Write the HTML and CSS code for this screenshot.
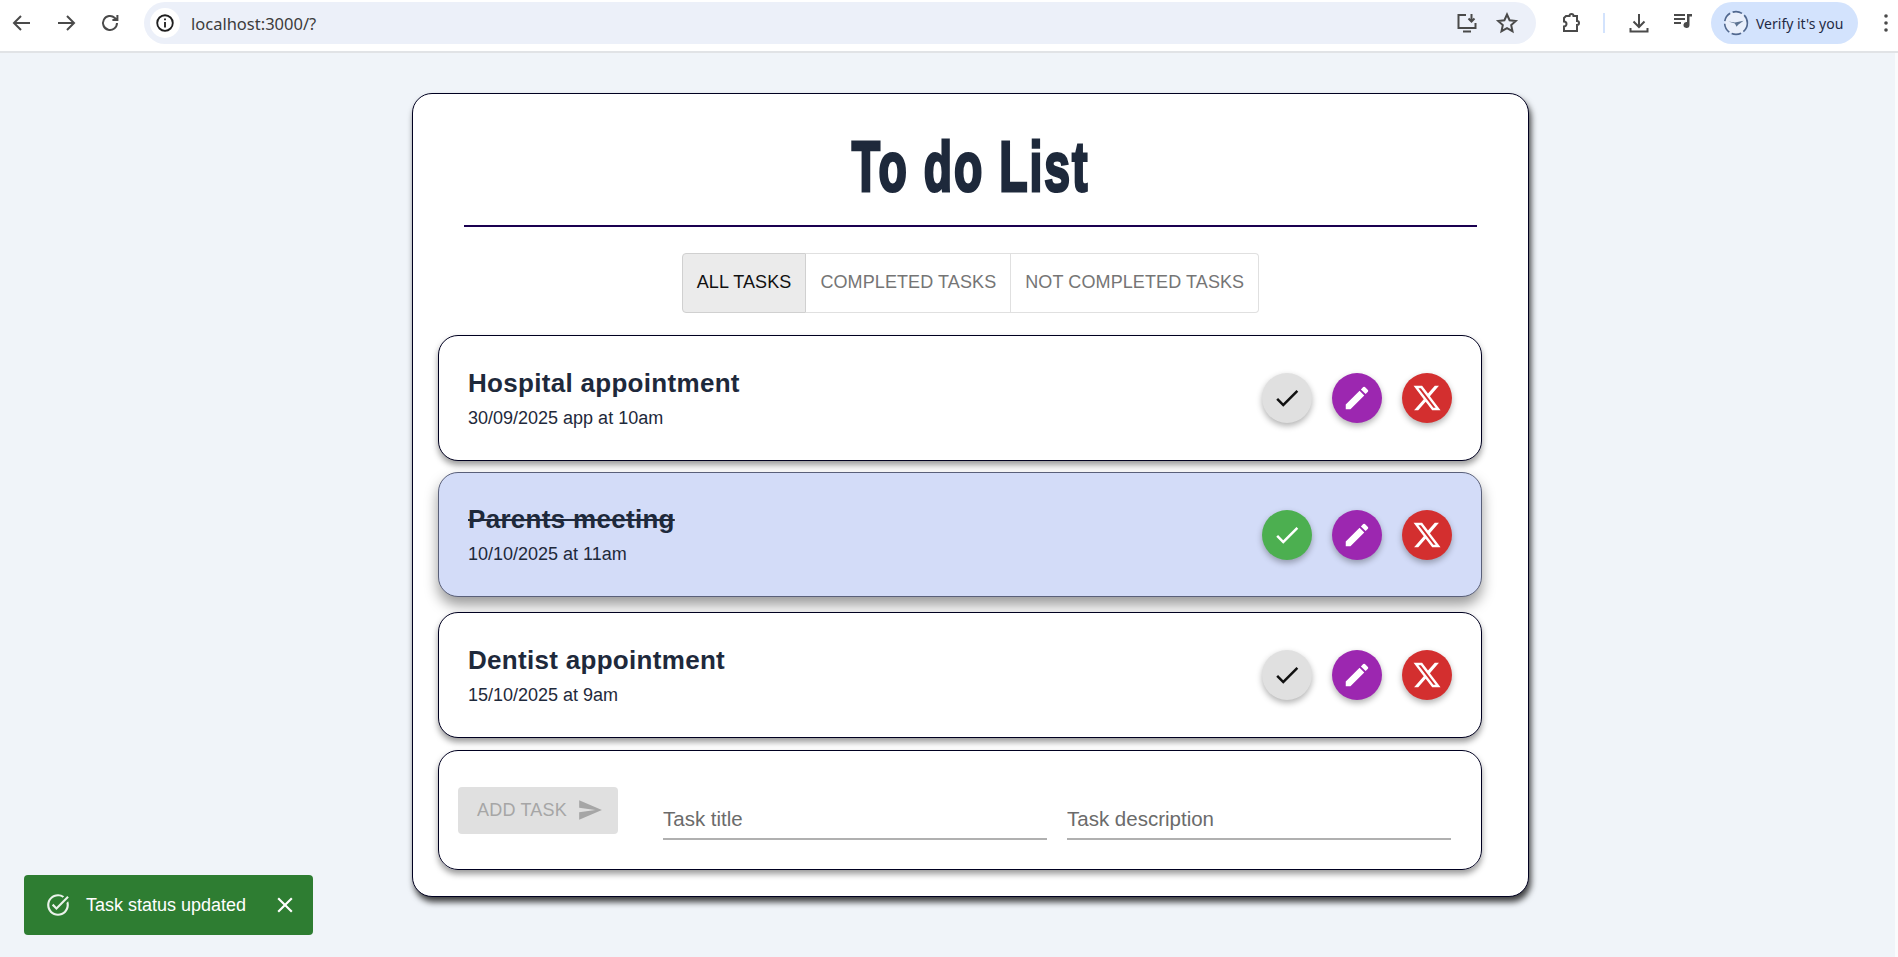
FILE: index.html
```html
<!DOCTYPE html>
<html lang="en">
<head>
    <meta charset="UTF-8">
    <title>To do List</title>
    <link rel="stylesheet" href="styles.css">
</head>
<body>

<header class="toolbar">
    <div class="nav">
        <svg class="tool" viewBox="0 0 24 24"><path d="M20 12H5M11 5l-7 7 7 7"/></svg>
        <svg class="tool" viewBox="0 0 24 24"><path d="M4 12h15M13 5l7 7-7 7"/></svg>
        <svg class="tool" viewBox="0 0 24 24"><path d="M19 12a7 7 0 1 1-2.2-5.1L19 9M19.400 4v5h-5"/></svg>
    </div>
    <div class="address">
        <span class="site-info">
            <svg viewBox="0 0 24 24"><circle cx="12" cy="12" r="8.500"/><path d="M12 11v6M12 7v2"/></svg>
        </span>
        <span class="url">localhost:3000/?</span>
        <svg class="tool install" viewBox="0 0 24 24"><path d="M11 4H3.500v13h17v-5M8 20.500h8M16.500 3v7M13.500 7.500l3 3 3-3"/></svg>
        <svg class="tool star" viewBox="0 0 24 24"><path d="M12 3.500l2.600 5.700 6.200.7-4.600 4.200 1.300 6.100-5.500-3.100-5.500 3.100 1.300-6.100-4.600-4.200 6.200-.7z"/></svg>
    </div>
    <svg class="tool puzzle" viewBox="0 0 24 24"><path d="M8 5h3.500a2 2 0 0 1 4 0H19v5a2 2 0 0 1 0 4v6H6v-4.500a2.500 2.500 0 0 0 0-5V7z"/></svg>
    <span class="separator"></span>
    <svg class="tool download" viewBox="0 0 24 24"><path d="M12 3v13M6.500 10.500L12 16l5.500-5.500M3.500 17v3.500h17V17"/></svg>
    <svg class="tool music" viewBox="0 0 24 24"><path d="M3 6h11M3 10h11M3 14h7"/><path class="music-note" d="M16 5h5v2.500h-2.500V16a3 3 0 1 1-2.500-3z"/></svg>
    <div class="profile">
        <svg class="avatar" viewBox="0 0 24 24"><circle class="avatar-ring" cx="12" cy="12" r="10.500"/><path class="avatar-wing" d="M5 10.500l6 1 8-1.500-5 3.500-1.500 2-1.500-3z"/></svg>
        <span>Verify it's you</span>
    </div>
    <svg class="dots" viewBox="0 0 4 18"><circle cx="2" cy="2" r="1.800"/><circle cx="2" cy="9" r="1.800"/><circle cx="2" cy="16" r="1.800"/></svg>
</header>

<main class="card">
    <h1 class="title"><span>To do List</span></h1>

    <div class="tabs">
        <button class="tab tab-active">ALL TASKS</button>
        <button class="tab">COMPLETED TASKS</button>
        <button class="tab">NOT COMPLETED TASKS</button>
    </div>

    <div class="tasks">
        <div class="task task-first">
            <div class="task-text">
                <h2>Hospital appointment</h2>
                <p>30/09/2025 app at 10am</p>
            </div>
            <div class="actions">
                <button class="round round-grey"><svg viewBox="0 0 24 24"><path d="M9 16.170 4.830 12l-1.420 1.410L9 19 21 7l-1.410-1.410z"/></svg></button>
                <button class="round round-purple"><svg viewBox="0 0 24 24"><path d="M3 17.250V21h3.750L17.810 9.940l-3.750-3.750L3 17.250zM20.710 7.040c.39-.39.39-1.020 0-1.410l-2.340-2.340a.996.996 0 0 0-1.410 0l-1.830 1.830 3.750 3.750 1.830-1.830z"/></svg></button>
                <button class="round round-red"><svg viewBox="0 0 24 24"><path d="M18.244 2.250h3.308l-7.227 8.260 8.502 11.240H16.170l-5.214-6.817L4.990 21.750H1.680l7.730-8.835L1.254 2.250H8.080l4.713 6.231zm-1.161 17.520h1.833L7.084 4.126H5.117z"/></svg></button>
            </div>
        </div>
        <div class="task task-done">
            <div class="task-text">
                <h2>Parents meeting</h2>
                <p>10/10/2025 at 11am</p>
            </div>
            <div class="actions">
                <button class="round round-green"><svg viewBox="0 0 24 24"><path d="M9 16.170 4.830 12l-1.420 1.410L9 19 21 7l-1.410-1.410z"/></svg></button>
                <button class="round round-purple"><svg viewBox="0 0 24 24"><path d="M3 17.250V21h3.750L17.810 9.940l-3.750-3.750L3 17.250zM20.710 7.040c.39-.39.39-1.020 0-1.410l-2.340-2.340a.996.996 0 0 0-1.410 0l-1.830 1.830 3.750 3.750 1.830-1.830z"/></svg></button>
                <button class="round round-red"><svg viewBox="0 0 24 24"><path d="M18.244 2.250h3.308l-7.227 8.260 8.502 11.240H16.170l-5.214-6.817L4.990 21.750H1.680l7.730-8.835L1.254 2.250H8.080l4.713 6.231zm-1.161 17.520h1.833L7.084 4.126H5.117z"/></svg></button>
            </div>
        </div>
        <div class="task task-last">
            <div class="task-text">
                <h2>Dentist appointment</h2>
                <p>15/10/2025 at 9am</p>
            </div>
            <div class="actions">
                <button class="round round-grey"><svg viewBox="0 0 24 24"><path d="M9 16.170 4.830 12l-1.420 1.410L9 19 21 7l-1.410-1.410z"/></svg></button>
                <button class="round round-purple"><svg viewBox="0 0 24 24"><path d="M3 17.250V21h3.750L17.810 9.940l-3.750-3.750L3 17.250zM20.710 7.040c.39-.39.39-1.020 0-1.410l-2.340-2.340a.996.996 0 0 0-1.410 0l-1.830 1.830 3.750 3.750 1.830-1.830z"/></svg></button>
                <button class="round round-red"><svg viewBox="0 0 24 24"><path d="M18.244 2.250h3.308l-7.227 8.260 8.502 11.240H16.170l-5.214-6.817L4.990 21.750H1.680l7.730-8.835L1.254 2.250H8.080l4.713 6.231zm-1.161 17.520h1.833L7.084 4.126H5.117z"/></svg></button>
            </div>
        </div>
        <div class="add-task">
            <button class="add-button">ADD TASK <svg viewBox="0 0 24 24"><path d="M2.010 21 23 12 2.010 3 2 10l15 2-15 2z"/></svg></button>
            <input class="field" type="text" placeholder="Task title">
            <input class="field" type="text" placeholder="Task description">
        </div>
    </div>
</main>

<div class="toast">
    <svg class="toast-icon" viewBox="0 0 24 24"><path d="M22 5.180 10.590 16.600l-4.240-4.240 1.410-1.410 2.830 2.830 10-10L22 5.180zm-2.210 5.040c.13.570.21 1.170.21 1.780 0 4.420-3.580 8-8 8s-8-3.580-8-8 3.580-8 8-8c1.580 0 3.040.46 4.280 1.250l1.440-1.440A9.900 9.900 0 0 0 12 2C6.480 2 2 6.480 2 12s4.480 10 10 10 10-4.480 10-10c0-1.190-.22-2.330-.6-3.390l-1.610 1.610z"/></svg>
    <span class="toast-text">Task status updated</span>
    <svg class="toast-close" viewBox="0 0 24 24"><path d="M19 6.410 17.590 5 12 10.590 6.410 5 5 6.410 10.590 12 5 17.590 6.410 19 12 13.410 17.590 19 19 17.590 13.410 12z"/></svg>
</div>

<div class="window-edge"></div>

</body>
</html>
```

FILE: styles.css
```css
body {
    background-color: #f0f4f9;
    font-family: "Liberation Sans", Arial, sans-serif;
    margin: 0;
    padding: 0;
    height: 957px;
    overflow: hidden;
    color: #1e293b;
}

/* browser bar */
.toolbar {
    display: flex;
    align-items: center;
    box-sizing: border-box;
    height: 53px;
    padding-bottom: 5px;
    background-color: white;
    border-bottom: 2px solid #e1e3e6;
    font-family: "Noto Sans", "Open Sans", sans-serif;
}
.tool {
    width: 24px;
    height: 24px;
    flex: none;
    fill: none;
    stroke: #4a4a4a;
    stroke-width: 2;
}
.nav {
    display: flex;
    gap: 20px;
    padding-left: 10px;
    width: 144px;
    box-sizing: border-box;
}
.address {
    display: flex;
    align-items: center;
    width: 1392px;
    height: 42px;
    margin-right: 22px;
    border-radius: 21px;
    background-color: #ecf0f9;
}
.site-info {
    display: flex;
    align-items: center;
    justify-content: center;
    width: 30px;
    height: 30px;
    margin-left: 6px;
    border-radius: 50%;
    background-color: white;
}
.site-info svg {
    width: 22px;
    height: 22px;
    fill: none;
    stroke: #1f1f1f;
    stroke-width: 2;
}
.url {
    flex: 1;
    margin-left: 11px;
    font-size: 16.500px;
    color: #3c3c3c;
}
.install {
    margin-right: 16px;
}
.star {
    margin-right: 17px;
}
.puzzle {
    margin-right: 21px;
}
.separator {
    width: 2px;
    height: 20px;
    margin-right: 22px;
    background-color: #d3e3fd;
}
.download {
    margin-right: 20px;
}
.music {
    margin-right: 16px;
    margin-top: -5px;
}
.music-note {
    fill: #4a4a4a;
    stroke: none;
}
.profile {
    display: flex;
    align-items: center;
    gap: 7px;
    width: 147px;
    height: 42px;
    padding-left: 12px;
    box-sizing: border-box;
    border-radius: 21px;
    background-color: #d3e3fd;
    font-size: 14px;
    color: #1f2a44;
}
.avatar {
    width: 26px;
    height: 26px;
    flex: none;
}
.avatar-ring {
    fill: #e9effb;
    stroke: #51688f;
    stroke-width: 1.500;
    stroke-dasharray: 9 2.500;
}
.avatar-wing {
    fill: #5d7391;
}
.dots {
    width: 4px;
    height: 18px;
    margin-left: 26px;
    fill: #4a4a4a;
}
.window-edge {
    position: fixed;
    top: 53px;
    right: 0;
    bottom: 0;
    width: 3px;
    background-color: #fafbfd;
}

/* main card */
.card {
    width: 1117px;
    height: 804px;
    margin: 40px 0 0 412px;
    box-sizing: border-box;
    background-color: white;
    border: 1px solid #000020;
    border-radius: 20px;
    box-shadow: 2px 5px 6px rgba(0, 0, 0, 0.75);
}
.title {
    height: 133px;
    margin: 0 51px 0 51px;
    box-sizing: border-box;
    padding-top: 28px;
    border-bottom: 2px solid #1a0050;
    text-align: center;
    font-size: 70px;
    font-weight: 700;
    line-height: 90px;
    letter-spacing: 3px;
}
.title span {
    display: inline-block;
    transform: scaleX(0.662);
    -webkit-text-stroke: 3px #1e293b;
}
.tabs {
    display: flex;
    justify-content: center;
    margin-top: 26px;
}
.tab {
    height: 60px;
    padding: 0 14px 2px;
    background-color: white;
    border: 1px solid #e0e0e0;
    border-left: none;
    font-family: inherit;
    font-size: 18px;
    letter-spacing: 0.1px;
    color: #757575;
}
.tab:first-child {
    border-left: 1px solid #d0d0d0;
    border-radius: 4px 0 0 4px;
}
.tab:last-child {
    border-radius: 0 4px 4px 0;
}
.tab-active {
    background-color: #ebebeb;
    border-color: #d0d0d0;
    color: #111;
}

/* task rows */
.tasks {
    width: 1044px;
    margin: 22px 0 0 25px;
}
.task {
    display: flex;
    align-items: center;
    justify-content: space-between;
    height: 126px;
    margin-bottom: 13px;
    padding: 0 29px;
    box-sizing: border-box;
    background-color: white;
    border: 1px solid #000020;
    border-radius: 20px;
    box-shadow: 0 4px 6px rgba(0, 0, 0, 0.4);
}
.task-first {
    margin-bottom: 11px;
}
.task-done {
    height: 125px;
    margin-bottom: 15px;
    background-color: #d3dcf8;
    border-color: #5a607a;
    box-shadow: 0 8px 14px rgba(0, 0, 0, 0.4);
}
.task-last {
    margin-bottom: 12px;
}
.task-done h2 {
    text-decoration: line-through;
}
.task-text h2 {
    margin: 0 0 9px;
    font-size: 26px;
    font-weight: 700;
    letter-spacing: 0.3px;
}
.task-text p {
    margin: 0;
    font-size: 18px;
}
.actions {
    display: flex;
    gap: 20px;
}
.round {
    display: flex;
    align-items: center;
    justify-content: center;
    width: 50px;
    height: 50px;
    padding: 0;
    border: none;
    border-radius: 50%;
    box-shadow: 0 3px 6px rgba(0, 0, 0, 0.3);
    color: white;
    fill: white;
}
.round svg {
    width: 30px;
    height: 30px;
}
.round-grey {
    background-color: #e0e0e0;
    fill: #111;
}
.round-green {
    background-color: #4caf50;
}
.round-purple {
    background-color: #9c27b0;
}
.round-red {
    background-color: #d32f2f;
}

/* add task row */
.add-task {
    display: flex;
    align-items: center;
    height: 120px;
    padding: 0 30px 0 19px;
    box-sizing: border-box;
    border: 1px solid #000020;
    border-radius: 20px;
    box-shadow: 0 4px 6px rgba(0, 0, 0, 0.4);
}
.add-button {
    display: flex;
    align-items: center;
    justify-content: center;
    gap: 10px;
    width: 160px;
    height: 47px;
    margin-right: 45px;
    flex: none;
    padding: 0 0 0 4px;
    background-color: #e0e0e0;
    border: none;
    border-radius: 4px;
    font-family: inherit;
    font-size: 18px;
    letter-spacing: 0.2px;
    color: #a6a6a6;
    fill: #a6a6a6;
}
.add-button svg {
    width: 26px;
    height: 26px;
}
.field {
    align-self: flex-start;
    width: 384px;
    height: 40px;
    margin: 49px 0 0;
    padding: 0;
    flex: none;
    box-sizing: border-box;
    border: none;
    border-bottom: 2px solid #b0b0b0;
    font-family: inherit;
    font-size: 20.500px;
}
.field + .field {
    margin-left: 20px;
}
.field::placeholder {
    color: #6b6b6b;
    opacity: 1;
}

/* toast */
.toast {
    position: fixed;
    left: 24px;
    top: 875px;
    display: flex;
    align-items: center;
    width: 289px;
    height: 60px;
    padding: 0 15px 0 21px;
    box-sizing: border-box;
    border-radius: 4px;
    background-color: #2e7d32;
    color: white;
    fill: white;
}
.toast-icon {
    width: 26px;
    height: 26px;
    opacity: 0.9;
}
.toast-text {
    flex: 1;
    margin: 1px 0 0 15px;
    font-size: 18px;
}
.toast-close {
    width: 26px;
    height: 26px;
}
```
